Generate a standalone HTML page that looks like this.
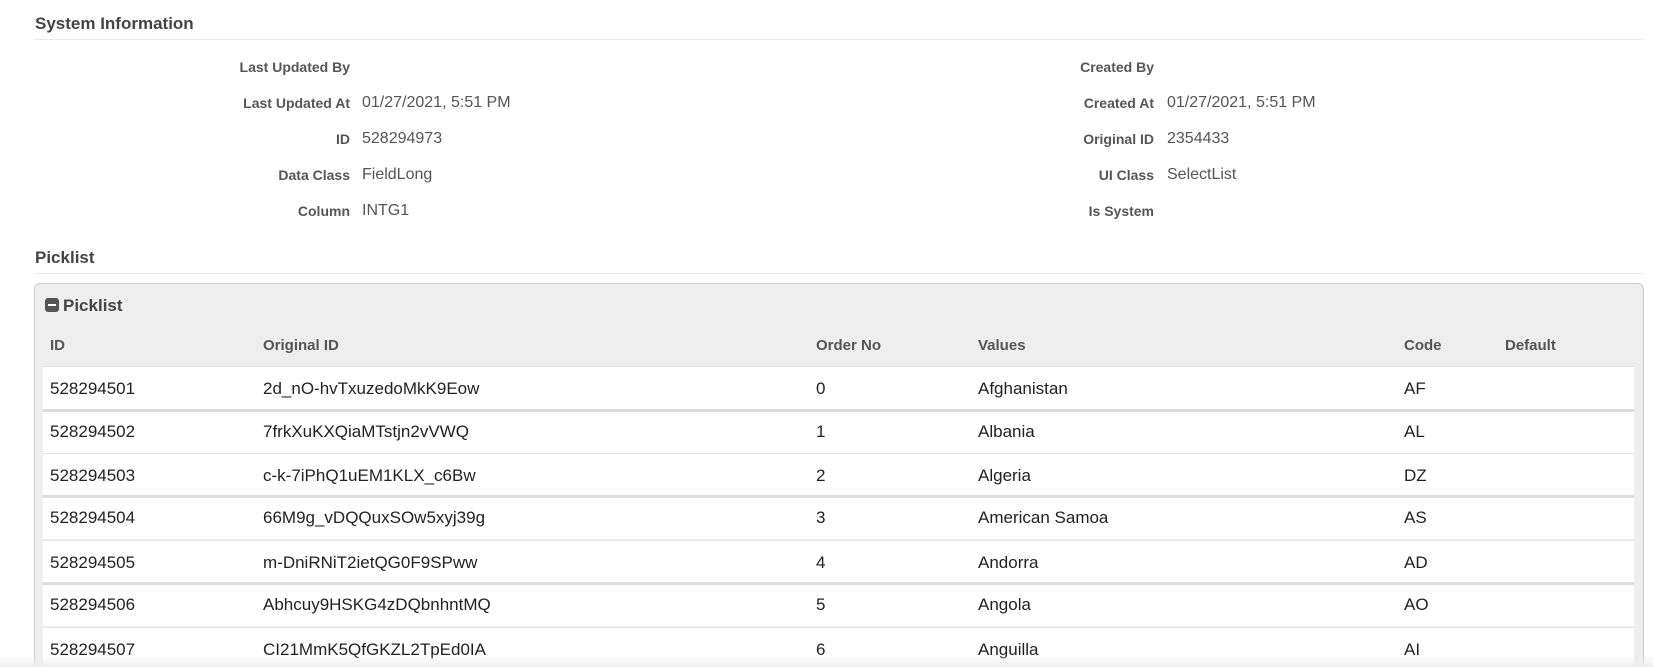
<!DOCTYPE html>
<html style="height:667px;overflow:hidden"><head><meta charset="utf-8"><style>
*{margin:0;padding:0;box-sizing:border-box}
body{width:1653px;height:667px;overflow:hidden;background:#fff;font-family:"Liberation Sans",sans-serif;color:#333;position:relative}
.h{position:absolute;left:35px;font-size:17px;font-weight:bold;color:#444;line-height:20px}
.hr{position:absolute;left:34px;right:10px;height:1px;background:#eaeaea}
.lab{position:absolute;font-size:14px;font-weight:bold;color:#555;text-align:right;width:220px;line-height:18px}
.val{position:absolute;font-size:16px;color:#555;line-height:18px}
.panel{position:absolute;left:34px;top:283px;width:1610px;height:384px;background:#eee;border:1px solid #ccc;border-bottom:none;border-radius:6px 6px 0 0}
.th{position:absolute;top:337px;font-size:15px;font-weight:bold;color:#555;line-height:18px}
.row{position:absolute;left:43px;width:1591px;height:44px;background:#fff;border-top:1px solid #e4e4e4}
.row.t{border-top:3px solid #ddd}
.row span{position:absolute;top:12px;font-size:17px;color:#222;line-height:20px}
.row.t span{top:10px}
.shade{position:absolute;left:0;right:0;top:655px;height:12px;background:linear-gradient(#fff0,#eee)}
</style></head><body>
<div class="h" style="top:14px">System Information</div>
<div class="hr" style="top:39px"></div>
<div class="lab" style="left:130px;top:58px">Last Updated By</div>
<div class="lab" style="left:130px;top:94px">Last Updated At</div><div class="val" style="left:362px;top:94px">01/27/2021, 5:51 PM</div>
<div class="lab" style="left:130px;top:130px">ID</div><div class="val" style="left:362px;top:130px">528294973</div>
<div class="lab" style="left:130px;top:166px">Data Class</div><div class="val" style="left:362px;top:166px">FieldLong</div>
<div class="lab" style="left:130px;top:202px">Column</div><div class="val" style="left:362px;top:202px">INTG1</div>
<div class="lab" style="left:934px;top:58px">Created By</div>
<div class="lab" style="left:934px;top:94px">Created At</div><div class="val" style="left:1167px;top:94px">01/27/2021, 5:51 PM</div>
<div class="lab" style="left:934px;top:130px">Original ID</div><div class="val" style="left:1167px;top:130px">2354433</div>
<div class="lab" style="left:934px;top:166px">UI Class</div><div class="val" style="left:1167px;top:166px">SelectList</div>
<div class="lab" style="left:934px;top:202px">Is System</div>
<div class="h" style="top:248px">Picklist</div>
<div class="hr" style="top:273px"></div>
<div class="panel"></div>
<div style="position:absolute;left:45px;top:298px;width:14px;height:14px;background:#555;border-radius:3px"><div style="position:absolute;left:3px;top:6px;width:8px;height:2px;background:#fff"></div></div>
<div class="h" style="left:63px;top:296px;color:#444">Picklist</div>
<div class="th" style="left:50px">ID</div>
<div class="th" style="left:263px">Original ID</div>
<div class="th" style="left:816px">Order No</div>
<div class="th" style="left:978px">Values</div>
<div class="th" style="left:1404px">Code</div>
<div class="th" style="left:1505px">Default</div>
<div class="row" style="top:366px"><span style="left:7px">528294501</span><span style="left:220px">2d_nO-hvTxuzedoMkK9Eow</span><span style="left:773px">0</span><span style="left:935px">Afghanistan</span><span style="left:1361px">AF</span></div>
<div class="row t" style="top:409px"><span style="left:7px">528294502</span><span style="left:220px">7frkXuKXQiaMTstjn2vVWQ</span><span style="left:773px">1</span><span style="left:935px">Albania</span><span style="left:1361px">AL</span></div>
<div class="row" style="top:453px"><span style="left:7px">528294503</span><span style="left:220px">c-k-7iPhQ1uEM1KLX_c6Bw</span><span style="left:773px">2</span><span style="left:935px">Algeria</span><span style="left:1361px">DZ</span></div>
<div class="row t" style="top:495px"><span style="left:7px">528294504</span><span style="left:220px">66M9g_vDQQuxSOw5xyj39g</span><span style="left:773px">3</span><span style="left:935px">American Samoa</span><span style="left:1361px">AS</span></div>
<div class="row" style="top:540px"><span style="left:7px">528294505</span><span style="left:220px">m-DniRNiT2ietQG0F9SPww</span><span style="left:773px">4</span><span style="left:935px">Andorra</span><span style="left:1361px">AD</span></div>
<div class="row t" style="top:582px"><span style="left:7px">528294506</span><span style="left:220px">Abhcuy9HSKG4zDQbnhntMQ</span><span style="left:773px">5</span><span style="left:935px">Angola</span><span style="left:1361px">AO</span></div>
<div class="row" style="top:627px;height:40px"><span style="left:7px">528294507</span><span style="left:220px">CI21MmK5QfGKZL2TpEd0IA</span><span style="left:773px">6</span><span style="left:935px">Anguilla</span><span style="left:1361px">AI</span></div>
<div class="shade"></div>
</body></html>
